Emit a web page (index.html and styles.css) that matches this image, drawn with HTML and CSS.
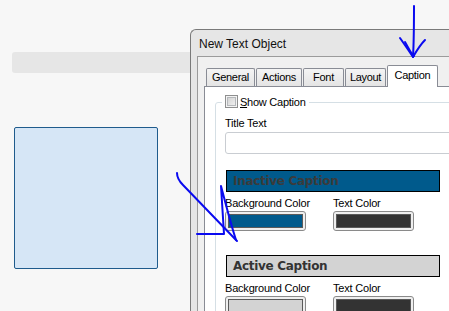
FILE: index.html
```html
<!DOCTYPE html>
<html lang="en">
<head>
    <meta charset="UTF-8">
    <meta name="viewport" content="width=device-width, initial-scale=1.0">
    <title>New Text Object</title>
    <link rel="stylesheet" href="styles.css">
</head>
<body>

    <div class="desk">
        <div class="toolbar"></div>
        <div class="shape"></div>
    </div>

    <div class="dialog">
        <div class="dialog-title">New Text Object</div>
        <div class="dialog-client">
            <div class="tabs">
                <div class="tab tab-general">General</div>
                <div class="tab tab-actions">Actions</div>
                <div class="tab tab-font">Font</div>
                <div class="tab tab-layout">Layout</div>
                <div class="tab tab-caption active">Caption</div>
            </div>
            <div class="tab-panel">
                <div class="group">
                    <div class="group-head">
                        <span class="check"></span>
                        <span><u>S</u>how Caption</span>
                    </div>

                    <div class="field-label title-label">Title Text</div>
                    <div class="text-input"></div>

                    <div class="caption-bar inactive">Inactive Caption</div>
                    <div class="color-row">
                        <div class="color-field">
                            <div class="field-label">Background Color</div>
                            <div class="swatch"><span class="swatch-fill fill-blue"></span></div>
                        </div>
                        <div class="color-field">
                            <div class="field-label">Text Color</div>
                            <div class="swatch"><span class="swatch-fill fill-dark"></span></div>
                        </div>
                    </div>

                    <div class="caption-bar active-bar">Active Caption</div>
                    <div class="color-row">
                        <div class="color-field">
                            <div class="field-label">Background Color</div>
                            <div class="swatch"><span class="swatch-fill fill-grey"></span></div>
                        </div>
                        <div class="color-field">
                            <div class="field-label">Text Color</div>
                            <div class="swatch"><span class="swatch-fill fill-dark"></span></div>
                        </div>
                    </div>
                </div>
            </div>
        </div>
    </div>

    <!-- hand-drawn marks on top of the screenshot -->
    <svg class="scribbles" width="449" height="311" viewBox="0 0 449 311">
        <path d="M414 6 C414 25 414 40 413 57" />
        <path d="M400 38 C405 45 409 51 413 57 C417 50 420 45 425 40" />
        <path d="M405 42 C409 49 411 54 414 56" />
        <path d="M177 173 C177 178 179 181 183 185 L237 241" />
        <path d="M197 234 L224 234 L221 186 C226 205 231 225 236 240" />
    </svg>

</body>
</html>
```

FILE: styles.css
```css
html,
body {
    margin: 0;
    height: 100%;
    overflow: hidden;
}

body {
    position: relative;
    background-color: #f7f7f7;
    font-family: "Liberation Sans", Arial, sans-serif;
    font-size: 11px;
    color: #000;
}

/* page behind the dialog */
.desk {
    padding: 52px 0 0 12px;
}

    .toolbar {
        width: 200px;
        height: 21px;
        background: #e6e6e6;
        border-radius: 3px;
    }

    .shape {
        margin: 54px 0 0 2px;
        width: 142px;
        height: 140px;
        border: 1px solid #1f5b8c;
        border-radius: 2px;
        background: #d6e6f6;
    }

/* dialog window, cut off by the right and bottom edge of the shot */
.dialog {
    position: absolute;
    left: 190px;
    top: 29px;
    width: 258px;
    height: 281px;
    overflow: hidden;
    border: 1px solid #7a7a7a;
    border-right: none;
    border-bottom: none;
    border-radius: 6px 0 0 0;
    background: #e6e6e6;
}

.dialog-title {
    height: 26px;
    box-sizing: border-box;
    padding: 7px 0 0 8px;
    font-size: 12px;
    line-height: 14px;
    color: #111;
}

.dialog-client {
    margin: 0 -40px 0 6px;
    height: 300px;
    border-top: 1px solid #9b9b9b;
    border-left: 1px solid #9b9b9b;
    background: #f0f0f0;
    padding: 8px 0 0 6px;
}

.tabs {
    position: relative;
    z-index: 1;
    display: flex;
    align-items: flex-end;
    gap: 1px;
    height: 22px;
    padding-left: 2px;
    margin-bottom: -1px;
}

.tab {
    box-sizing: border-box;
    height: 18px;
    margin-bottom: 1px;
    border: 1px solid #898c95;
    border-bottom: none;
    border-radius: 2px 2px 0 0;
    background: linear-gradient(#f4f4f4, #e4e4e4);
    text-align: center;
    line-height: 16px;
    letter-spacing: -0.3px;
}

    .tab.active {
        height: 22px;
        margin-bottom: 0;
        padding-top: 1px;
        background: #fff;
    }

.tab-general { width: 49px; }
.tab-actions { width: 46px; }
.tab-font { width: 41px; }
.tab-layout { width: 41px; }
.tab-caption { width: 51px; }

.tab-panel {
    height: 260px;
    border: 1px solid #898c95;
    background: #fff;
    padding: 15px 0 0 10px;
}

.group {
    height: 300px;
    border: 1px solid #d5dfe5;
    border-radius: 3px;
    padding-left: 9px;
}

.group-head {
    display: flex;
    align-items: center;
    gap: 2px;
    width: max-content;
    height: 13px;
    margin: -8px 0 0 -3px;
    padding: 0 3px;
    background: #fff;
    letter-spacing: -0.25px;
}

.check {
    width: 13px;
    height: 13px;
    box-sizing: border-box;
    border: 1px solid #8e8f8f;
    background: linear-gradient(135deg, #cdcdcd, #f6f6f6);
    box-shadow: inset 0 0 0 1px #f4f4f4, inset 0 0 0 2px #b5b8bb;
}

.field-label {
    line-height: 14px;
    letter-spacing: -0.2px;
}

.title-label {
    margin-top: 8px;
}

.text-input {
    width: 260px;
    height: 22px;
    box-sizing: border-box;
    margin-top: 2px;
    border: 1px solid #c9cdd2;
    border-radius: 3px;
    background: #fff;
}

.caption-bar {
    width: 214px;
    height: 22px;
    box-sizing: border-box;
    margin: 16px 0 0 1px;
    padding-left: 6px;
    border: 1px solid #000;
    font-family: "DejaVu Sans", Verdana, sans-serif;
    font-weight: bold;
    font-size: 12px;
    line-height: 20px;
    letter-spacing: -0.3px;
    color: #3b3b3b;
}

    .caption-bar.inactive {
        background: #005a8c;
    }

    .caption-bar.active-bar {
        margin-top: 24px;
        background: #d3d3d3;
        color: #333;
    }

.color-row {
    display: flex;
}

.color-field {
    width: 108px;
}

    .color-field .field-label {
        margin-top: 4px;
    }

.swatch {
    width: 81px;
    height: 20px;
    box-sizing: border-box;
    margin-top: 1px;
    padding: 2px;
    border: 1px solid #8a8a8a;
    border-radius: 3px;
    background: #efefef;
}

.swatch-fill {
    display: block;
    height: 100%;
    box-sizing: border-box;
    border: 1px solid #5a5a5a;
}

.fill-blue { background: #005a8c; }
.fill-dark { background: #333; }
.fill-grey { background: #d3d3d3; }

/* pen marks */
.scribbles {
    position: absolute;
    left: 0;
    top: 0;
    z-index: 5;
    pointer-events: none;
    fill: none;
    stroke: #0a0af0;
    stroke-width: 2;
    stroke-linecap: round;
    stroke-linejoin: round;
}
```
